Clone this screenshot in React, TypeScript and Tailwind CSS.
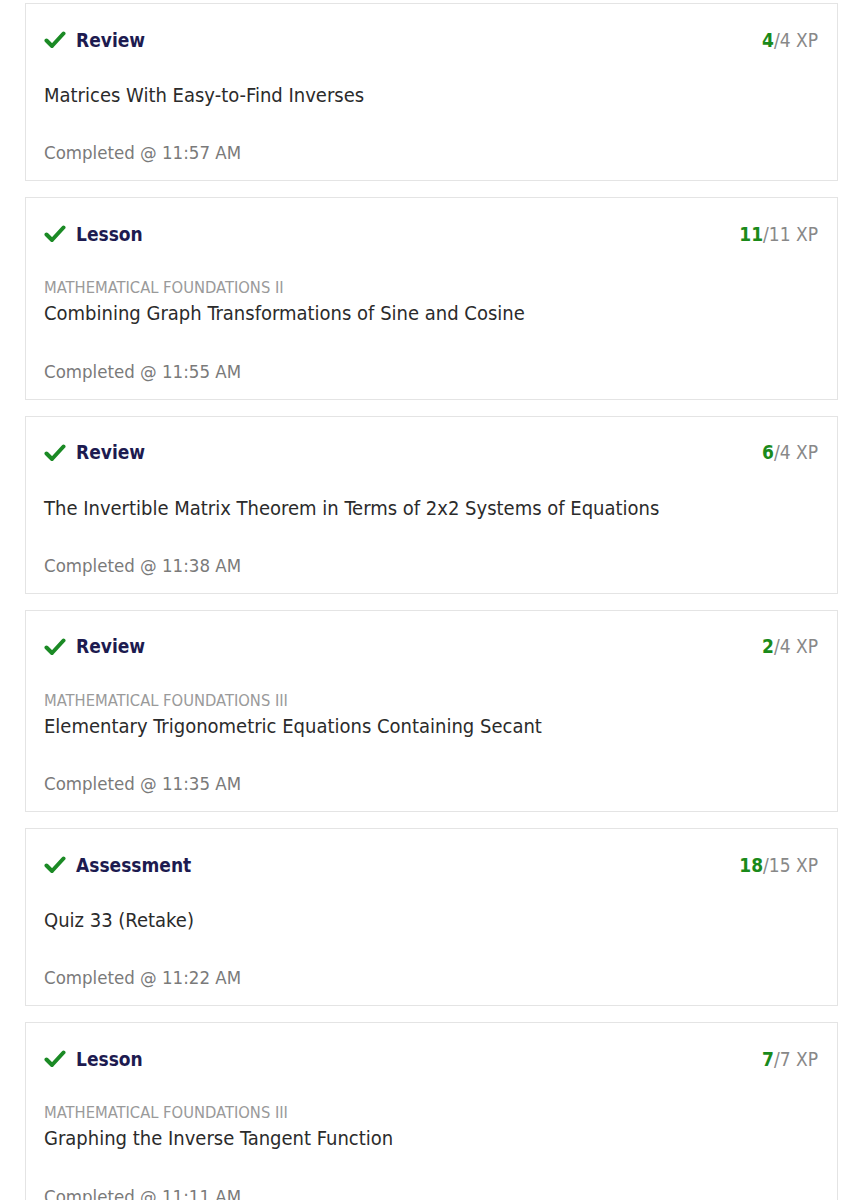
import React from "react";

type Item = {
  kind: string;
  category?: string;
  title: string;
  time: string;
  earned: number;
  total: number;
};

const items: Item[] = [
  { kind: "Review", title: "Matrices With Easy-to-Find Inverses", time: "11:57 AM", earned: 4, total: 4 },
  { kind: "Lesson", category: "MATHEMATICAL FOUNDATIONS II", title: "Combining Graph Transformations of Sine and Cosine", time: "11:55 AM", earned: 11, total: 11 },
  { kind: "Review", title: "The Invertible Matrix Theorem in Terms of 2x2 Systems of Equations", time: "11:38 AM", earned: 6, total: 4 },
  { kind: "Review", category: "MATHEMATICAL FOUNDATIONS III", title: "Elementary Trigonometric Equations Containing Secant", time: "11:35 AM", earned: 2, total: 4 },
  { kind: "Assessment", title: "Quiz 33 (Retake)", time: "11:22 AM", earned: 18, total: 15 },
  { kind: "Lesson", category: "MATHEMATICAL FOUNDATIONS III", title: "Graphing the Inverse Tangent Function", time: "11:11 AM", earned: 7, total: 7 },
];

const Check = () => (
  <svg width="22" height="18" viewBox="0 0 22 18" className="shrink-0">
    <path d="M2.5 9.5 L8 15 L19.5 2.5" fill="none" stroke="#1b8a25" strokeWidth="4" strokeLinecap="round" strokeLinejoin="round" />
  </svg>
);

const Card = ({ item }: { item: Item }) => (
  <div className="border border-[#e4e4e4] bg-white pl-[18px] pr-[19px] pt-[22px] pb-[13px]">
    <div className="flex h-[28px] items-center justify-between">
      <div className="flex items-center">
        <Check />
        <span className="ml-[10px] text-[19px] font-bold text-[#1d1b50]">{item.kind}</span>
      </div>
      <div className="text-[19px] text-[#888]">
        <span className="font-bold text-[#1a8a1a]">{item.earned}</span>/{item.total} XP
      </div>
    </div>
    <div className={item.category ? "mt-[28px]" : "mt-[27px]"}>
      {item.category && (
        <div className="mb-[1px] h-[22px] text-[16.4px] leading-[24px] text-[#9a9a9a]">{item.category}</div>
      )}
      <div className="text-[20px] leading-[28px] text-[#2b2b2b]">{item.title}</div>
    </div>
    <div className={`${item.category ? "mt-[30.5px]" : "mt-[30px]"} text-[18.5px] leading-[28px] text-[#7a7a7a]`}>
      Completed @ {item.time}
    </div>
  </div>
);

export default function App() {
  return (
    <div
      className="min-h-screen bg-white pl-[25px] pr-[14px] pt-[3px]"
      style={{ fontFamily: '"DejaVu Sans Condensed", "DejaVu Sans", sans-serif' }}
    >
      <div className="flex flex-col gap-[16px]">
        {items.map((it, i) => (
          <Card key={i} item={it} />
        ))}
      </div>
    </div>
  );
}
